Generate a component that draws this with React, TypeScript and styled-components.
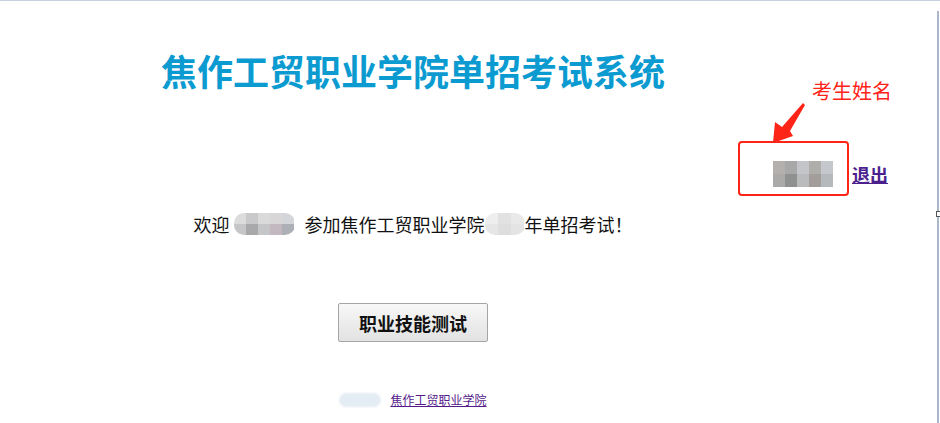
import { FC } from 'react';
import styled, { createGlobalStyle } from 'styled-components';

const GlobalStyle = createGlobalStyle`
    html, body {
        margin: 0;
        padding: 0;
        background: #fff;
        font-family: "Noto Sans CJK SC", "Liberation Sans", sans-serif;
    }
`

// 打码部分的颜色（用户名、年份）
const nameCells = ['#b3b0ae', '#a9a8a8', '#c3c5c8', '#b0aeaa', '#c4c8cc', '#acaaa8', '#8f9090', '#b9bbbd', '#a39d9c', '#b5b9bc']
const welcomeCells = ['#dcdcdc', '#c9c9cb', '#dadadb', '#d9d6d8', '#d3d5d8', '#c6c5c7', '#a9a9ab', '#c5c6c8', '#c3b8bf', '#adb0b6']
const yearCells = ['#eeeeee', '#e2e2e2', '#e9e9e9', '#e6e6e6', '#dedede', '#e4e4e4']

const Mosaic: FC<{ cells: string[]; cols: number; w: number; h: number; round?: boolean }> = ({ cells, cols, w, h, round }) => (
    <SMosaic $cols={cols} $w={w} $h={h} $round={round}>
        {cells.map((c, i) => (
            <SCell key={i} style={{ background: c }} />
        ))}
    </SMosaic>
)

export default function App() {
    return (
        <>
            <GlobalStyle />
            <SFrame>
                <SPage>
                    <STitle>焦作工贸职业学院单招考试系统</STitle>
                    <SUserRow>
                        <Mosaic cells={nameCells} cols={5} w={60} h={26} />
                        <SLogout href="#">退出</SLogout>
                        <SNote>考生姓名</SNote>
                        <SArrow width="50" height="50" viewBox="0 0 50 50">
                            <polygon points="43,5 45,7 30,33 33,38 13,45 15,24 22,29" fill="#ff2418" />
                        </SArrow>
                        <SMarkBox />
                    </SUserRow>
                    <SWelcome>
                        欢迎
                        <Mosaic cells={welcomeCells} cols={5} w={61} h={22} round />
                        参加焦作工贸职业学院
                        <Mosaic cells={yearCells} cols={3} w={40} h={22} round />
                        年单招考试<SBang>！</SBang>
                    </SWelcome>
                    <SButton>职业技能测试</SButton>
                    <SFooter>
                        <SBlob />
                        <SFootLink href="#">焦作工贸职业学院</SFootLink>
                    </SFooter>
                </SPage>
                <SEdge>
                    <SEdgeMark />
                </SEdge>
            </SFrame>
        </>
    )
}

const SFrame = styled.div`
    display: flex;
    width: 940px;
    height: 423px;
    box-sizing: border-box;
    border-top: 1px solid #c6d1e0;
    overflow: hidden;
`
const SPage = styled.div`
    width: 890px;
    display: flex;
    flex-direction: column;
`
const STitle = styled.h1`
    width: 826px;
    margin: 47px 0 0;
    text-align: center;
    font-size: 36px;
    line-height: 44px;
    font-weight: 700;
    color: #0b9bd1;
`
const SUserRow = styled.div`
    position: relative;
    margin-top: 68px;
    height: 28px;
    display: flex;
    justify-content: flex-end;
    align-items: center;
    gap: 19px;
    padding-right: 2px;
`
const SMosaic = styled.span<{ $cols: number; $w: number; $h: number; $round?: boolean }>`
    display: inline-grid;
    grid-template-columns: repeat(${p => p.$cols}, 1fr);
    width: ${p => p.$w}px;
    height: ${p => p.$h}px;
    border-radius: ${p => (p.$round ? '10px' : '0')};
    overflow: hidden;
    filter: blur(0.6px);
    vertical-align: middle;
`
const SCell = styled.span`
    display: block;
`
const SLogout = styled.a`
    font-size: 18px;
    font-weight: 700;
    color: #4b1f8e;
    text-decoration: underline;
    line-height: 26px;
`
const SNote = styled.span`
    position: absolute;
    left: 812px;
    top: -83px;
    white-space: nowrap;
    font-size: 20px;
    line-height: 28px;
    color: #ff2418;
`
const SArrow = styled.svg`
    position: absolute;
    left: 760px;
    top: -62px;
`
const SMarkBox = styled.div`
    position: absolute;
    left: 738px;
    top: -19px;
    width: 111px;
    height: 55px;
    box-sizing: border-box;
    border: 2px solid #ff2418;
    border-radius: 4px;
`
const SWelcome = styled.div`
    width: 826px;
    margin-top: 23px;
    display: flex;
    justify-content: center;
    align-items: center;
    font-size: 18px;
    line-height: 26px;
    color: #111;
    & > span:first-of-type {
        margin: 0 10px 0 4px;
    }
`
const SBang = styled.span`
    display: inline-block;
    width: 18px;
    text-align: center;
`
const SButton = styled.button`
    align-self: flex-start;
    margin: 66px 0 0 338px;
    width: 150px;
    height: 39px;
    border: 1px solid #a5a5a5;
    border-radius: 2px;
    background: linear-gradient(#f8f8f8, #e2e2e2);
    font-family: "Noto Sans CJK SC", sans-serif;
    font-size: 18px;
    font-weight: 700;
    color: #111;
`
const SFooter = styled.div`
    width: 826px;
    margin-top: 50px;
    display: flex;
    justify-content: center;
    align-items: center;
    gap: 9px;
`
const SBlob = styled.span`
    width: 42px;
    height: 14px;
    border-radius: 7px;
    background: #e4edf4;
    filter: blur(1px);
`
const SFootLink = styled.a`
    font-size: 12px;
    line-height: 16px;
    color: #551a8b;
    text-decoration: underline;
`
const SEdge = styled.div`
    position: relative;
    margin: 10px 0 0 47px;
    width: 2px;
    background: #aab8ca;
`
const SEdgeMark = styled.span`
    position: absolute;
    left: -1px;
    top: 200px;
    width: 3px;
    height: 4px;
    border: 1px solid #555;
    background: #fff;
`
